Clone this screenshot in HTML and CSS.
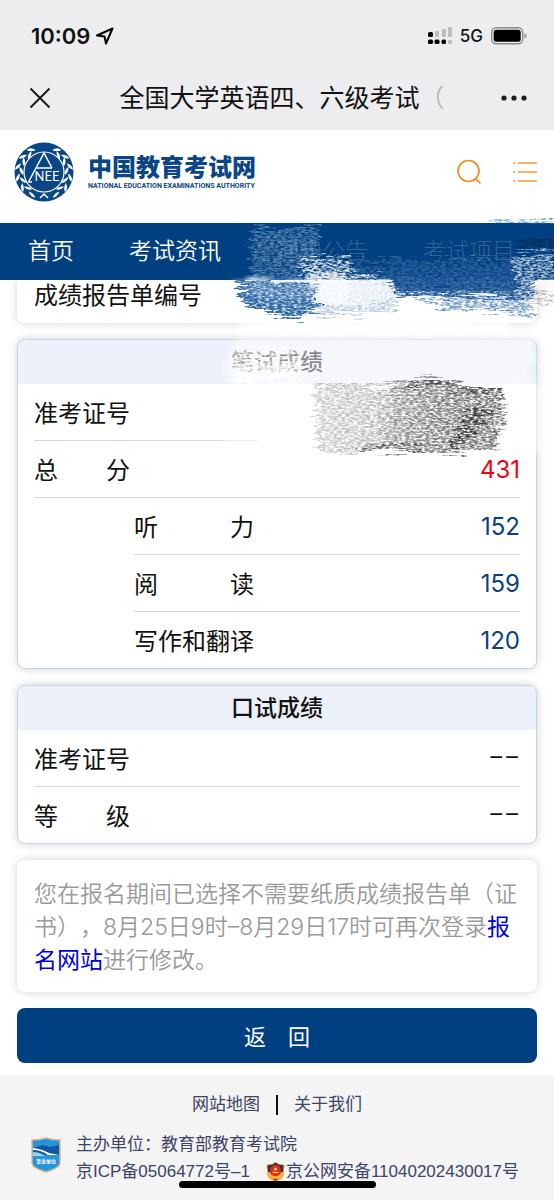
FILE: index.html
```
<!DOCTYPE html>
<html lang="zh-CN">
<head>
    <meta charset="UTF-8">
    <meta name="viewport" content="width=device-width, initial-scale=1.0">
    <title>全国大学英语四、六级考试</title>
    <link rel="stylesheet" href="styles.css">
</head>
<body>
<div class="page">

    <!-- Phone status bar and browser title -->
    <div class="top">
        <div class="status">
            <span class="time">10:09</span>
            <svg class="location" width="18" height="18" viewBox="0 0 18 18">
                <path d="M1 8.500L16.500 1.500L10 16.500L8.500 9.500Z" fill="none" stroke="#000" stroke-width="2" stroke-linejoin="round"/>
            </svg>
            <svg class="signal" width="25" height="18" viewBox="0 0 25 18">
                <g fill="#bdbdc0">
                    <rect x="7" y="4" width="4" height="6" rx="1"/>
                    <rect x="14" y="2" width="4" height="8" rx="1"/>
                    <rect x="20" y="0" width="4" height="10" rx="1"/>
                    <rect x="20" y="13" width="4" height="4" rx="1"/>
                </g>
                <rect x="0" y="5" width="5" height="5" rx="1.500"/>
                <rect x="0" y="12.500" width="5" height="4.500" rx="1.500"/>
                <rect x="6.500" y="12.500" width="5" height="4.500" rx="1.500"/>
                <rect x="13.500" y="12.500" width="4.500" height="4.500" rx="1.500"/>
            </svg>
            <span class="network">5G</span>
            <svg width="36" height="18" viewBox="0 0 36 18">
                <rect x="0.700" y="0.700" width="31" height="16" rx="4.500" fill="none" stroke="#8c8c8e" stroke-width="1.400"/>
                <rect x="2.700" y="2.700" width="27" height="12" rx="2.500"/>
                <path d="M33.500 6Q35.500 7 35.500 8.700T33.500 11.500Z" fill="#8c8c8e"/>
            </svg>
        </div>
        <div class="titlebar">
            <button class="icon-button" aria-label="关闭">
                <svg width="22" height="22" viewBox="0 0 22 22">
                    <path d="M1.500 1.500L20.500 20.500M20.500 1.500L1.500 20.500" stroke="#1c1c1c" stroke-width="2"/>
                </svg>
            </button>
            <div class="title">全国大学英语四、六级考试<span class="fade">（</span></div>
            <button class="icon-button" aria-label="更多">
                <svg width="26" height="6" viewBox="0 0 26 6" fill="#1c1c1c">
                    <circle cx="3" cy="3" r="2.600"/>
                    <circle cx="13" cy="3" r="2.600"/>
                    <circle cx="23" cy="3" r="2.600"/>
                </svg>
            </button>
        </div>
    </div>

    <header class="site-header">
        <svg class="emblem" width="60" height="60" viewBox="0 0 60 60">
            <defs>
                <path id="leaf" d="M0 -4.500Q3.200 -1 0 4.500Q-2.400 0 0 -4.500Z"/>
                <g id="sprig" fill="#fff">
                    <use href="#leaf" transform="rotate(-30 30 30) translate(30 4.500) rotate(-60)"/>
                    <use href="#leaf" transform="rotate(-40 30 30) translate(30 8) rotate(-120)"/>
                    <use href="#leaf" transform="rotate(-54 30 30) translate(30 4) rotate(-60)"/>
                    <use href="#leaf" transform="rotate(-63 30 30) translate(30 7.500) rotate(-120)"/>
                    <use href="#leaf" transform="rotate(-78 30 30) translate(30 3.500) rotate(-60)"/>
                    <use href="#leaf" transform="rotate(-87 30 30) translate(30 7.500) rotate(-120)"/>
                    <use href="#leaf" transform="rotate(-102 30 30) translate(30 3.500) rotate(-60)"/>
                    <use href="#leaf" transform="rotate(-111 30 30) translate(30 7.500) rotate(-120)"/>
                    <use href="#leaf" transform="rotate(-126 30 30) translate(30 3.500) rotate(-60)"/>
                    <use href="#leaf" transform="rotate(-135 30 30) translate(30 7.500) rotate(-120)"/>
                    <use href="#leaf" transform="rotate(-152 30 30) translate(30 4.500) rotate(-75)"/>
                </g>
            </defs>
            <circle cx="30" cy="30" r="29.500" fill="#0a4586"/>
            <use href="#sprig"/>
            <use href="#sprig" transform="translate(60 0) scale(-1 1)"/>
            <circle cx="30" cy="30" r="20" fill="#0a4586" stroke="#fff" stroke-width="1.200"/>
            <path d="M14.500 40L30 11L38 26M22 26H38M14.500 40H18M26 56L30 52L34 56" fill="none" stroke="#fff" stroke-width="1.500"/>
            <text x="33" y="39" class="emblem-text">NEE</text>
        </svg>
        <div class="brand">
            <div class="brand-cn">中国教育考试网</div>
            <div class="brand-en">NATIONAL EDUCATION EXAMINATIONS AUTHORITY</div>
        </div>
        <button class="icon-button" aria-label="搜索">
            <svg width="26" height="26" viewBox="0 0 26 26" fill="none" stroke="#f28c1c" stroke-width="1.700">
                <circle cx="12.500" cy="12" r="10.500"/>
                <path d="M19.500 19.500L24.500 24.500"/>
            </svg>
        </button>
        <button class="icon-button menu-button" aria-label="菜单">
            <svg width="24" height="22" viewBox="0 0 24 22" stroke="#f2993a" stroke-width="1.600">
                <path d="M0 2H2M5 2H24M0 11H2M5 11H24M0 20H2M5 20H24"/>
            </svg>
        </button>
    </header>

    <nav class="nav">
        <a href="#">首页</a>
        <a href="#">考试资讯</a>
        <a href="#" class="faded">通知公告</a>
        <a href="#" class="faded">考试项目</a>
    </nav>

    <main class="content">
        <section class="card report">成绩报告单编号</section>

        <section class="card bordered">
            <h2>笔试成绩</h2>
            <table>
                <tr><th colspan="2">准考证号</th><td class="ghost">0</td></tr>
                <tr><th colspan="2">总　　分</th><td class="total">431</td></tr>
                <tr><td class="indent" rowspan="3"></td><th>听　　　力</th><td>152</td></tr>
                <tr><th>阅　　　读</th><td>159</td></tr>
                <tr><th>写作和翻译</th><td>120</td></tr>
            </table>
        </section>

        <section class="card bordered">
            <h2>口试成绩</h2>
            <table>
                <tr><th>准考证号</th><td class="none">––</td></tr>
                <tr><th>等　　级</th><td class="none">––</td></tr>
            </table>
        </section>

        <section class="card notice">您在报名期间已选择不需要纸质成绩报告单（证书），8月25日9时–8月29日17时可再次登录<a href="#">报名网站</a>进行修改。</section>

        <button class="back">返　回</button>
    </main>

    <footer class="footer">
        <div class="links">
            <a href="#">网站地图</a>
            <span class="divider"></span>
            <a href="#">关于我们</a>
        </div>
        <div class="info">
            <svg class="shield" width="30" height="36" viewBox="0 0 30 36">
                <path d="M1 3Q9 3 15 1Q21 3 29 3V26Q29 31 15 35Q1 31 1 26Z" fill="#2494dc" stroke="#d9b88c" stroke-width="1.500"/>
                <path d="M2 11L12 8L19 10L28 8V18H2Z" fill="#1456a0"/>
                <path d="M2 11Q11 12 18 16L28 18H17Q10 13 2 13Z" fill="#fff"/>
                <path d="M2 15Q9 15 14 19H2Z" fill="#9bd0f3"/>
                <text x="15" y="26" class="shield-text">事业单位</text>
            </svg>
            <div>
                <div>主办单位：教育部教育考试院</div>
                <div class="record">
                    <span>京ICP备05064772号–1</span>
                    <svg class="police" width="21" height="22" viewBox="0 0 21 22">
                        <path d="M10.500 1L14 3Q19 2 20 5Q18 8 19 11Q20 18 10.500 21Q1 18 2 11Q3 8 1 5Q2 2 7 3Z" fill="#efb23e"/>
                        <path d="M10.500 1.500L13.500 3.500L18.500 4.500L18 11H3L2.500 4.500L7.500 3.500Z" fill="#292f5c"/>
                        <circle cx="10.500" cy="9.500" r="5.800" fill="#d92b20"/>
                        <circle cx="10.500" cy="8" r="1.500" fill="#ffd34d"/>
                        <path d="M7.500 11.500H13.500" stroke="#ffd34d" stroke-width="1.300"/>
                        <path d="M8 18.500Q10.500 16.500 13 18.500L10.500 20Z" fill="#c8281e"/>
                    </svg>
                    <span>京公网安备11040202430017号</span>
                </div>
            </div>
        </div>
    </footer>

    <!-- Brush strokes that hide the private numbers -->
    <svg class="scribble" width="344" height="260" viewBox="0 0 344 260" aria-hidden="true">
        <defs>
            <filter id="soft" x="-10%" y="-10%" width="120%" height="120%" color-interpolation-filters="sRGB">
                <feTurbulence type="fractalNoise" baseFrequency="0.03 0.2" numOctaves="3" seed="4" result="n"/>
                <feDisplacementMap in="SourceGraphic" in2="n" scale="20" xChannelSelector="R" yChannelSelector="G" result="d"/>
                <feGaussianBlur in="d" stdDeviation="2"/>
            </filter>
            <filter id="dense" x="-10%" y="-20%" width="120%" height="140%" color-interpolation-filters="sRGB">
                <feTurbulence type="fractalNoise" baseFrequency="0.02 0.35" numOctaves="4" seed="2" result="n"/>
                <feDisplacementMap in="SourceGraphic" in2="n" scale="24" xChannelSelector="R" yChannelSelector="G" result="d"/>
                <feTurbulence type="fractalNoise" baseFrequency="0.25 0.6" numOctaves="5" seed="8"/>
                <feColorMatrix values="0 0 0 0 0  0 0 0 0 0  0 0 0 0 0  2.500 0 0 0 -0.450" result="g"/>
                <feComposite in="d" in2="g" operator="in"/>
            </filter>
            <filter id="grain" x="-10%" y="-20%" width="120%" height="140%" color-interpolation-filters="sRGB">
                <feTurbulence type="fractalNoise" baseFrequency="0.02 0.35" numOctaves="4" seed="6" result="n"/>
                <feDisplacementMap in="SourceGraphic" in2="n" scale="24" xChannelSelector="R" yChannelSelector="G" result="d"/>
                <feTurbulence type="fractalNoise" baseFrequency="0.25 0.6" numOctaves="5" seed="3"/>
                <feColorMatrix values="0 0 0 0 0  0 0 0 0 0  0 0 0 0 0  2.600 0 0 0 -0.800" result="g"/>
                <feComposite in="d" in2="g" operator="in"/>
            </filter>
            <linearGradient id="pencil">
                <stop offset="0" stop-color="#888" stop-opacity="0.450"/>
                <stop offset="0.350" stop-color="#777" stop-opacity="0.550"/>
                <stop offset="0.600" stop-color="#555" stop-opacity="0.750"/>
                <stop offset="1" stop-color="#444" stop-opacity="0.850"/>
            </linearGradient>
        </defs>

        <!-- white wash over the card -->
        <path d="M30 118H322V168H332V236H42L10 228L22 170L12 150Z" fill="#fff" opacity="0.500" filter="url(#soft)"/>
        <path d="M26 66H300V118H30Z" fill="#fff" opacity="0.800" filter="url(#soft)"/>
        <path d="M40 172H312V234H50Z" fill="#fff" filter="url(#soft)"/>
        <path d="M20 134H90V166H26Z" fill="#fff" filter="url(#grain)" opacity="0.800"/>
        <path d="M26 148H90V166H26Z" fill="#fff" filter="url(#dense)" opacity="0.700"/>

        <!-- blue strokes below the nav -->
        <path d="M30 65H107V94L86 104L32 90Z" fill="#2c68a6" filter="url(#dense)"/>
        <path d="M102 65H188V95L150 99L108 102Z" fill="#6791bd" opacity="0.500" filter="url(#grain)"/>
        <path d="M180 52H320V76H186Z" fill="#064387"/>
        <path d="M176 62H322V82H186Z" fill="#114b8d" filter="url(#dense)"/>
        <path d="M200 80H322V101L230 94Z" fill="#4279b2" opacity="0.800" filter="url(#grain)"/>
        <path d="M278 6L300 4L322 3L344 6V9H280Z" fill="#3d78ad" opacity="0.700" filter="url(#grain)"/>

        <!-- pale strokes on the nav -->
        <path d="M44 12H110L104 84H40V34Z" fill="#b5cce2" opacity="0.480" filter="url(#grain)"/>
        <path d="M88 44L136 40L144 56L182 66L194 80L160 90L104 90Z" fill="#fff" opacity="0.850" filter="url(#grain)"/>
        <path d="M100 56L136 54L142 92H112Z" fill="#fff" opacity="0.700" filter="url(#dense)"/>
        <path d="M140 44H310V66H150Z" fill="#8caed2" opacity="0.300" filter="url(#grain)"/>
        <path d="M180 66H315V82H190Z" fill="#a9c3de" opacity="0.350" filter="url(#grain)"/>
        <path d="M300 40L344 36V84H312Z" fill="#f2f5f9" opacity="0.750" filter="url(#grain)"/>
        <path d="M306 26L344 24V32L308 34Z" fill="#06264d" opacity="0.800" filter="url(#grain)"/>
        <path d="M318 78L344 74V90L322 88Z" fill="#a09591" opacity="0.600" filter="url(#grain)"/>

        <!-- grey pencil over the number -->
        <path d="M104 170L225 164L292 174L295 205L285 238L108 238Z" fill="url(#pencil)" filter="url(#grain)"/>
        <path d="M180 172H288V236H168Z" fill="#777" opacity="0.300" filter="url(#grain)"/>
        <path d="M262 192L284 198L264 222L235 236L248 212Z" fill="#222" opacity="0.700" filter="url(#grain)"/>
        <path d="M215 166L290 173V177L180 172Z" fill="#333" opacity="0.700" filter="url(#grain)"/>
        <path d="M150 232L220 230V238H150Z" fill="#333" opacity="0.600" filter="url(#grain)"/>
    </svg>

    <div class="home-bar"></div>
</div>
</body>
</html>
```
FILE: styles.css
```
* {
    box-sizing: border-box;
}

body {
    margin: 0;
    background-color: #fff;
    color: #111;
    font-family: "Liberation Sans", "Noto Sans CJK SC", sans-serif;
    font-size: 24px;
    text-spacing-trim: space-all;
}

a {
    text-decoration: none;
}

button {
    font-family: inherit;
    border: none;
    cursor: pointer;
}

svg {
    display: block;
    flex: none;
}

.page {
    position: relative;
}

.icon-button {
    display: flex;
    padding: 0;
    background: none;
}

/* phone bars */
.top {
    background-color: #ededef;
    padding: 20px 27px 14px 29px;
}

.status {
    display: flex;
    align-items: center;
    height: 32px;
    padding-left: 2px;
    font-family: Inter, sans-serif;
}

.time {
    font-size: 22px;
    font-weight: 600;
}

.location {
    margin-left: 6px;
}

.signal {
    margin-left: auto;
}

.network {
    margin: 0 8px 0 7px;
    font-size: 17px;
    font-weight: 500;
}

.titlebar {
    display: flex;
    align-items: center;
    justify-content: space-between;
    height: 64px;
    padding-top: 28px;
}

.title {
    padding-left: 12px;
    white-space: nowrap;
    font-size: 25px;
    line-height: 36px;
}

.fade {
    color: #bbb;
}

/* site header */
.site-header {
    display: flex;
    align-items: center;
    height: 93px;
    padding: 0 17px 9px 14px;
}

.emblem {
    margin-right: 14px;
}

.emblem-text {
    font-family: Lato, sans-serif;
    font-size: 13px;
    fill: #fff;
    text-anchor: middle;
}

.brand {
    margin-right: auto;
    color: #0a4586;
    white-space: nowrap;
}

.brand-cn {
    font-size: 24px;
    font-weight: 900;
    line-height: 27px;
}

.brand-en {
    font-family: Roboto, sans-serif;
    font-size: 7px;
    font-weight: 700;
    line-height: 10px;
}

.menu-button {
    margin-left: 31px;
}

.nav {
    display: flex;
    align-items: center;
    gap: 55px;
    height: 57px;
    padding: 0 0 5px 28px;
    background-color: #004080;
    overflow: hidden;
    white-space: nowrap;
}

.nav a {
    color: #fff;
    font-size: 23px;
    font-weight: 350;
}

.nav .faded {
    color: #326296;
    font-weight: 300;
}

/* cards */
.content {
    padding: 0 17px 12px;
}

.card {
    margin-bottom: 16px;
    border-radius: 8px;
    background-color: #fff;
    box-shadow: 0 0 10px rgba(0, 0, 0, 0.18);
    overflow: hidden;
}

.report {
    padding: 0 17px 12px;
    line-height: 31px;
    border-radius: 0 0 8px 8px;
    clip-path: inset(0 -12px -12px -12px);
}

.bordered {
    border: 1px solid #c3d5e6;
}

h2 {
    margin: 0;
    background-color: #ebf0f9;
    font-size: 23px;
    font-weight: 500;
    line-height: 44px;
    text-align: center;
}

table {
    width: 100%;
    padding: 0 16px;
    border-spacing: 0;
}

th,
td {
    height: 57px;
    padding: 0 0 2px;
    border-bottom: 1px solid #d6d8da;
    font-weight: 400;
    text-align: left;
}

td {
    padding: 0;
    color: #0a3f80;
    font-family: Inter, sans-serif;
    text-align: right;
}

tr:last-child th,
tr:last-child td {
    height: 56px;
    border-bottom: none;
}

.indent {
    width: 100px;
    border-bottom: none;
}

.total {
    color: #f00010;
}

.none {
    color: #111;
    font-family: Roboto, sans-serif;
}

.ghost {
    color: #eee;
}

.notice {
    padding: 18px 17px 15px;
    color: #999;
    font-family: Inter, "Noto Sans CJK SC", sans-serif;
    font-size: 23px;
    font-weight: 350;
    line-height: 33px;
}

.notice a {
    color: #0000e0;
    font-weight: 400;
}

.back {
    display: block;
    width: 100%;
    height: 55px;
    padding-bottom: 3px;
    border-radius: 8px;
    background-color: #004080;
    color: #fff;
    font-size: 22px;
}

/* footer */
.footer {
    padding: 16px 17px 15px;
    background-color: #f4f4f4;
    color: #3b4468;
    font-size: 17px;
    line-height: 27px;
}

.footer a {
    color: inherit;
}

.links {
    display: flex;
    justify-content: center;
    align-items: center;
    gap: 16px;
    margin-bottom: 13px;
}

.divider {
    width: 2px;
    height: 20px;
    background-color: #111;
}

.info {
    display: flex;
    padding-left: 14px;
    gap: 15px;
    white-space: nowrap;
}

.shield {
    margin-top: 6px;
}

.shield-text {
    font-size: 5px;
    font-weight: 700;
    fill: #fff;
    text-anchor: middle;
}

.record {
    display: flex;
    align-items: center;
}

.police {
    margin-left: 15px;
}

/* layers over the page */
.scribble {
    position: absolute;
    top: 215px;
    right: 0;
    pointer-events: none;
}

.home-bar {
    position: absolute;
    bottom: 12px;
    left: 50%;
    width: 197px;
    height: 7px;
    margin-left: -98px;
    border-radius: 4px;
    background-color: #000;
}
```
